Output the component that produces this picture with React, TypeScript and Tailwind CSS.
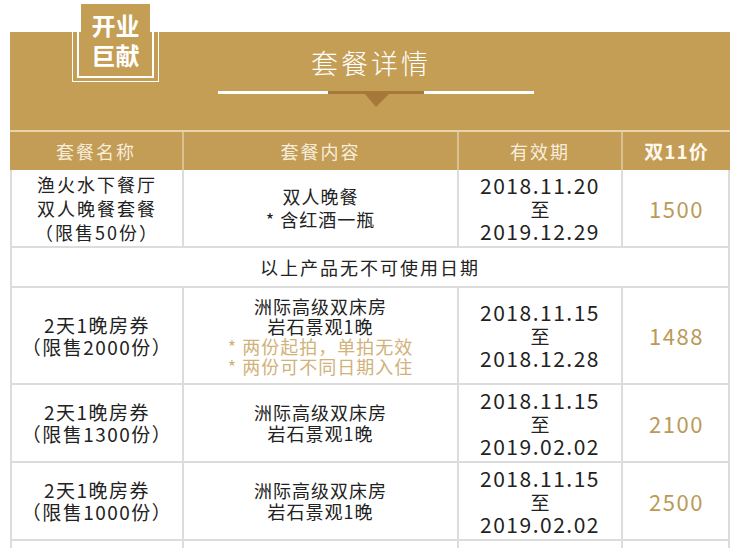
import React from "react";

const font = { fontFamily: '"Noto Sans CJK SC", "Noto Sans", sans-serif' };

function Row({
  h,
  c1,
  c2,
  c3,
  c4,
}: {
  h: string;
  c1: React.ReactNode;
  c2: React.ReactNode;
  c3: React.ReactNode;
  c4: React.ReactNode;
}) {
  return (
    <div className={`grid grid-cols-[172px_275px_164px_105px] border-b-2 border-[#dcdcdc] ${h}`}>
      <div className="flex flex-col items-center justify-center border-r-2 border-[#dcdcdc] text-center">{c1}</div>
      <div className="flex flex-col items-center justify-center border-r-2 border-[#dcdcdc] text-center">{c2}</div>
      <div className="flex flex-col items-center justify-center border-r-2 border-[#dcdcdc] text-center">{c3}</div>
      <div className="flex flex-col items-center justify-center text-center">{c4}</div>
    </div>
  );
}

function Dates({ a, b }: { a: string; b: string }) {
  return (
    <div className="flex flex-col items-center text-[21px] leading-[23px] text-[#222] tracking-[1.5px]">
      <span>{a}</span>
      <span className="text-[19px] tracking-normal">至</span>
      <span>{b}</span>
    </div>
  );
}

function Price({ v }: { v: string }) {
  return <span className="pl-[2px] text-[22px] tracking-[1.5px] text-[#bb9a58]">{v}</span>;
}

function RoomName({ n }: { n: string }) {
  return (
    <div className="flex flex-col items-center text-[19px] leading-[22px] tracking-[1.5px]">
      <span>2天1晚房券</span>
      <span>（限售{n}份）</span>
    </div>
  );
}

export default function App() {
  return (
    <div className="relative h-[548px] w-[740px] overflow-hidden bg-white" style={font}>
      <div className="h-[32px]" />
      {/* banner */}
      <div className="relative ml-[10px] h-[98px] w-[720px] bg-[#c49e55]">
        <div className="flex justify-center pt-[14px]">
          <span className="pl-[2px] text-[27px] font-light leading-[34px] tracking-[3px] text-white">套餐详情</span>
        </div>
        <svg className="absolute left-[208px] top-[59px]" width="316" height="17" viewBox="0 0 316 17">
          <rect x="0" y="0" width="110" height="3" fill="#ffffff" />
          <rect x="110" y="0" width="96" height="3" fill="#a6793b" />
          <rect x="206" y="0" width="110" height="3" fill="#ffffff" />
          <polygon points="146,2 172,2 158,16" fill="#a6793b" />
        </svg>
      </div>
      {/* badge */}
      <div className="absolute left-[72px] top-0 h-[82px] w-[87px] border-[1.5px] border-white" />
      <div className="absolute left-[77px] top-0 h-[78px] w-[77px] border-2 border-white" />
      <div className="absolute left-[81px] top-[4px] flex h-[71px] w-[69px] flex-col items-center justify-center bg-[#c49e55] text-[24px] font-bold leading-[30px] text-white">
        <span>开业</span>
        <span>巨献</span>
      </div>
      {/* header */}
      <div className="ml-[10px] grid h-[40px] w-[720px] grid-cols-[174px_275px_164px_107px] border-t-2 border-[#e6d4ab] bg-[#c39c56] text-[18px] tracking-[2px] text-[#f7eddb]">
        <div className="flex items-center justify-center border-r-2 border-[#d9c192]">套餐名称</div>
        <div className="flex items-center justify-center border-r-2 border-[#d9c192]">套餐内容</div>
        <div className="flex items-center justify-center border-r-2 border-[#d9c192]">有效期</div>
        <div className="flex items-center justify-center text-[19px] font-bold tracking-[1px] text-[#fffaf0]">双11价</div>
      </div>
      {/* body */}
      <div className="ml-[10px] w-[720px] border-x-2 border-[#dcdcdc] text-[18px] text-[#222]">
        <Row
          h="h-[78px]"
          c1={
            <div className="flex flex-col items-center leading-[24px] tracking-[2px]">
              <span>渔火水下餐厅</span>
              <span>双人晚餐套餐</span>
              <span>（限售50份）</span>
            </div>
          }
          c2={
            <div className="flex flex-col items-center leading-[23px] tracking-[1px]">
              <span>双人晚餐</span>
              <span>* 含红酒一瓶</span>
            </div>
          }
          c3={<Dates a="2018.11.20" b="2019.12.29" />}
          c4={<Price v="1500" />}
        />
        <div className="flex h-[40px] items-center justify-center border-b-2 border-[#dcdcdc] tracking-[2px]">
          以上产品无不可使用日期
        </div>
        <Row
          h="h-[97px]"
          c1={<RoomName n="2000" />}
          c2={
            <div className="flex flex-col items-center leading-[20px] tracking-[1px]">
              <span>洲际高级双床房</span>
              <span>岩石景观1晚</span>
              <span className="text-[#d0b27a]">* 两份起拍，单拍无效</span>
              <span className="text-[#d0b27a]">* 两份可不同日期入住</span>
            </div>
          }
          c3={<Dates a="2018.11.15" b="2018.12.28" />}
          c4={<Price v="1488" />}
        />
        <Row
          h="h-[78px]"
          c1={<RoomName n="1300" />}
          c2={
            <div className="flex flex-col items-center leading-[21px] tracking-[1px]">
              <span>洲际高级双床房</span>
              <span>岩石景观1晚</span>
            </div>
          }
          c3={<Dates a="2018.11.15" b="2019.02.02" />}
          c4={<Price v="2100" />}
        />
        <Row
          h="h-[78px]"
          c1={<RoomName n="1000" />}
          c2={
            <div className="flex flex-col items-center leading-[21px] tracking-[1px]">
              <span>洲际高级双床房</span>
              <span>岩石景观1晚</span>
            </div>
          }
          c3={<Dates a="2018.11.15" b="2019.02.02" />}
          c4={<Price v="2500" />}
        />
        <Row h="h-[78px]" c1={null} c2={null} c3={null} c4={null} />
      </div>
    </div>
  );
}
